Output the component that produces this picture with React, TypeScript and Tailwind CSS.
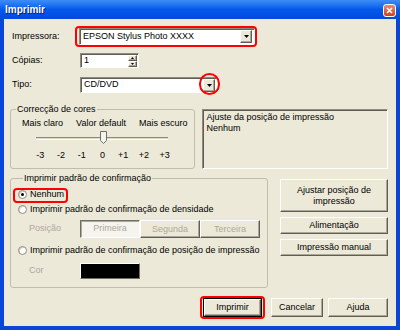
import type { ReactNode } from "react";

const raised =
  "border border-t-white border-l-white border-r-[#5f5d54] border-b-[#5f5d54] shadow-[inset_-1px_-1px_0_#aca899] bg-[#ece9d8]";
const sunken =
  "border border-t-[#8e8b7e] border-l-[#8e8b7e] border-b-white border-r-white shadow-[inset_1px_1px_0_#5f5d54]";

function Btn({ children, className = "" }: { children: ReactNode; className?: string }) {
  return (
    <div className={`flex items-center justify-center text-center leading-[11px] ${raised} ${className}`}>
      {children}
    </div>
  );
}

function Arrow() {
  return (
    <svg width="5" height="3" viewBox="0 0 5 3">
      <path d="M0 0h5L2.5 3z" fill="#000" />
    </svg>
  );
}

function DropBtn() {
  return (
    <div className={`flex h-[13px] w-[12px] items-center justify-center ${raised}`}>
      <Arrow />
    </div>
  );
}

function Radio({ checked = false }: { checked?: boolean }) {
  return (
    <div className="flex h-[9px] w-[9px] items-center justify-center rounded-full border border-[#8e8b7e] bg-white shadow-[inset_1px_1px_0_#d4d0c8]">
      {checked && <div className="h-[3px] w-[3px] rounded-full bg-black" />}
    </div>
  );
}

function Red({ className }: { className: string }) {
  return <div className={`pointer-events-none absolute border-2 border-[#ff0000] ${className}`} />;
}

export default function App() {
  return (
    <div className="relative flex h-[330px] w-[400px] flex-col bg-[#0a45da] font-['Liberation_Sans',Arial,sans-serif] text-[9px] text-black">
      {/* title bar */}
      <div className="flex h-[19px] items-center justify-between bg-gradient-to-b from-[#3d8df5] via-[#0458ec] to-[#0448dc] pl-[5px] pr-[4px]">
        <span className="text-[10px] font-bold text-white [text-shadow:1px_1px_0_#0a1e7a]">Imprimir</span>
        <div className="mt-[2px] flex h-[13px] w-[13px] items-center justify-center rounded-[3px] border border-white bg-gradient-to-b from-[#e88a6a] to-[#cf3f1a]">
          <svg width="7" height="7" viewBox="0 0 7 7">
            <path d="M1 1l5 5M6 1L1 6" stroke="#fff" strokeWidth="1.6" />
          </svg>
        </div>
      </div>

      {/* client area */}
      <div className="mx-[4px] mb-[4px] flex flex-1 flex-col bg-[#ece9d8] pl-[6px] pr-[8px] pt-[9px]">
        <div className="flex items-center">
          <span className="ml-[2px] w-[67px]">Impressora:</span>
          <div className={`flex h-[17px] w-[176px] items-center justify-between bg-white pl-[3px] pr-[2px] ${sunken}`}>
            <span>EPSON Stylus Photo XXXX</span>
            <DropBtn />
          </div>
        </div>

        <div className="mt-[8px] flex items-center">
          <span className="ml-[2px] w-[68px]">Cópias:</span>
          <div className={`flex h-[15px] w-[59px] items-center justify-between bg-white pl-[3px] pr-[1px] ${sunken}`}>
            <span>1</span>
            <div className="flex flex-col">
              <div className={`flex h-[6px] w-[9px] items-center justify-center ${raised}`}>
                <svg width="3" height="2" viewBox="0 0 3 2"><path d="M0 2h3L1.5 0z" /></svg>
              </div>
              <div className={`flex h-[6px] w-[9px] items-center justify-center ${raised}`}>
                <svg width="3" height="2" viewBox="0 0 3 2"><path d="M0 0h3L1.5 2z" /></svg>
              </div>
            </div>
          </div>
        </div>

        <div className="mt-[9px] flex items-center">
          <span className="ml-[2px] w-[68px]">Tipo:</span>
          <div className={`flex h-[16px] w-[137px] items-center justify-between bg-white pl-[3px] pr-[1px] ${sunken}`}>
            <span>CD/DVD</span>
            <DropBtn />
          </div>
        </div>

        {/* colour correction + info */}
        <div className="mt-[11px] flex items-start gap-[7px]">
          <fieldset className="w-[186px] rounded-[3px] border border-[#c0bdad] pb-[7px]">
            <legend className="ml-[5px] px-[1px] leading-[11px]">Correcção de cores</legend>
            <div className="mt-[3px] flex justify-between pl-[11px] pr-[7px] leading-[11px]">
              <span>Mais claro</span>
              <span>Valor default</span>
              <span>Mais escuro</span>
            </div>
            <div className="relative ml-[25px] mt-[2px] flex h-[14px] w-[132px] items-center">
              <div className="h-[3px] w-full border-t border-t-[#8e8b7e] border-b border-b-white bg-[#dcd9c8]" />
              <svg className="absolute left-[64px] top-0" width="7" height="13" viewBox="0 0 7 13">
                <path d="M0.5 0.5h6v9l-3 3l-3-3z" fill="#f4f3ee" stroke="#716f64" />
              </svg>
            </div>
            <div className="ml-[19px] mt-[5px] grid w-[145px] grid-cols-7 text-center leading-[11px]">
              <span>-3</span>
              <span>-2</span>
              <span>-1</span>
              <span>0</span>
              <span>+1</span>
              <span>+2</span>
              <span>+3</span>
            </div>
          </fieldset>
          <div className={`mt-[5px] h-[60px] w-[186px] px-[3px] pt-[2px] leading-[11px] ${sunken}`}>
            <div>Ajuste da posição de impressão</div>
            <div>Nenhum</div>
          </div>
        </div>

        {/* confirmation pattern + side buttons */}
        <div className="mt-[4px] flex items-start gap-[12px]">
          <fieldset className="w-[258px] rounded-[3px] border border-[#c0bdad] pb-[8px] pl-[7px]">
            <legend className="ml-[5px] px-[1px] leading-[11px]">Imprimir padrão de confirmação</legend>
            <div className="mt-[4px] flex h-[13px] items-center gap-[3px]">
              <Radio checked />
              <span>Nenhum</span>
            </div>
            <div className="mt-[2px] flex h-[13px] items-center gap-[3px]">
              <Radio />
              <span>Imprimir padrão de confirmação de densidade</span>
            </div>
            <div className="mt-[4px] flex items-center text-[#aca899]">
              <span className="ml-[11px] w-[51px]">Posição</span>
              <div className="flex">
                <div className="flex h-[18px] w-[60px] items-center justify-center border border-t-[#716f64] border-l-[#716f64] border-b-white border-r-white bg-[#f5f4ef] shadow-[inset_1px_1px_0_#aca899]">
                  Primeira
                </div>
                <Btn className="h-[18px] w-[60px]">Segunda</Btn>
                <Btn className="h-[18px] w-[60px]">Terceira</Btn>
              </div>
            </div>
            <div className="mt-[6px] flex h-[13px] items-center gap-[3px]">
              <Radio />
              <span>Imprimir padrão de confirmação de posição de impressão</span>
            </div>
            <div className="mt-[6px] flex items-center text-[#aca899]">
              <span className="ml-[11px] w-[51px]">Cor</span>
              <div className="h-[16px] w-[60px] border border-t-white border-l-white border-r-[#716f64] border-b-[#716f64] bg-black" />
            </div>
          </fieldset>
          <div className="mt-[6px] flex w-[108px] flex-col gap-[5px]">
            <Btn className="h-[33px] px-[4px]">Ajustar posição de impressão</Btn>
            <Btn className="h-[17px]">Alimentação</Btn>
            <Btn className="h-[17px]">Impressão manual</Btn>
          </div>
        </div>

        {/* dialog buttons */}
        <div className="mt-[10px] flex justify-end gap-[5px]">
          <div className="border border-black">
            <Btn className="h-[17px] w-[57px]">Imprimir</Btn>
          </div>
          <Btn className="ml-[4px] h-[19px] w-[52px]">Cancelar</Btn>
          <Btn className="h-[19px] w-[60px]">Ajuda</Btn>
        </div>
      </div>

      {/* annotation outlines */}
      <Red className="left-[75px] top-[26px] h-[21px] w-[182px] rounded-[4px]" />
      <Red className="left-[199px] top-[73px] h-[22px] w-[21px] rounded-full" />
      <Red className="left-[13px] top-[188px] h-[15px] w-[55px] rounded-[4px]" />
      <Red className="left-[200px] top-[296px] h-[23px] w-[65px] rounded-[4px]" />
    </div>
  );
}
